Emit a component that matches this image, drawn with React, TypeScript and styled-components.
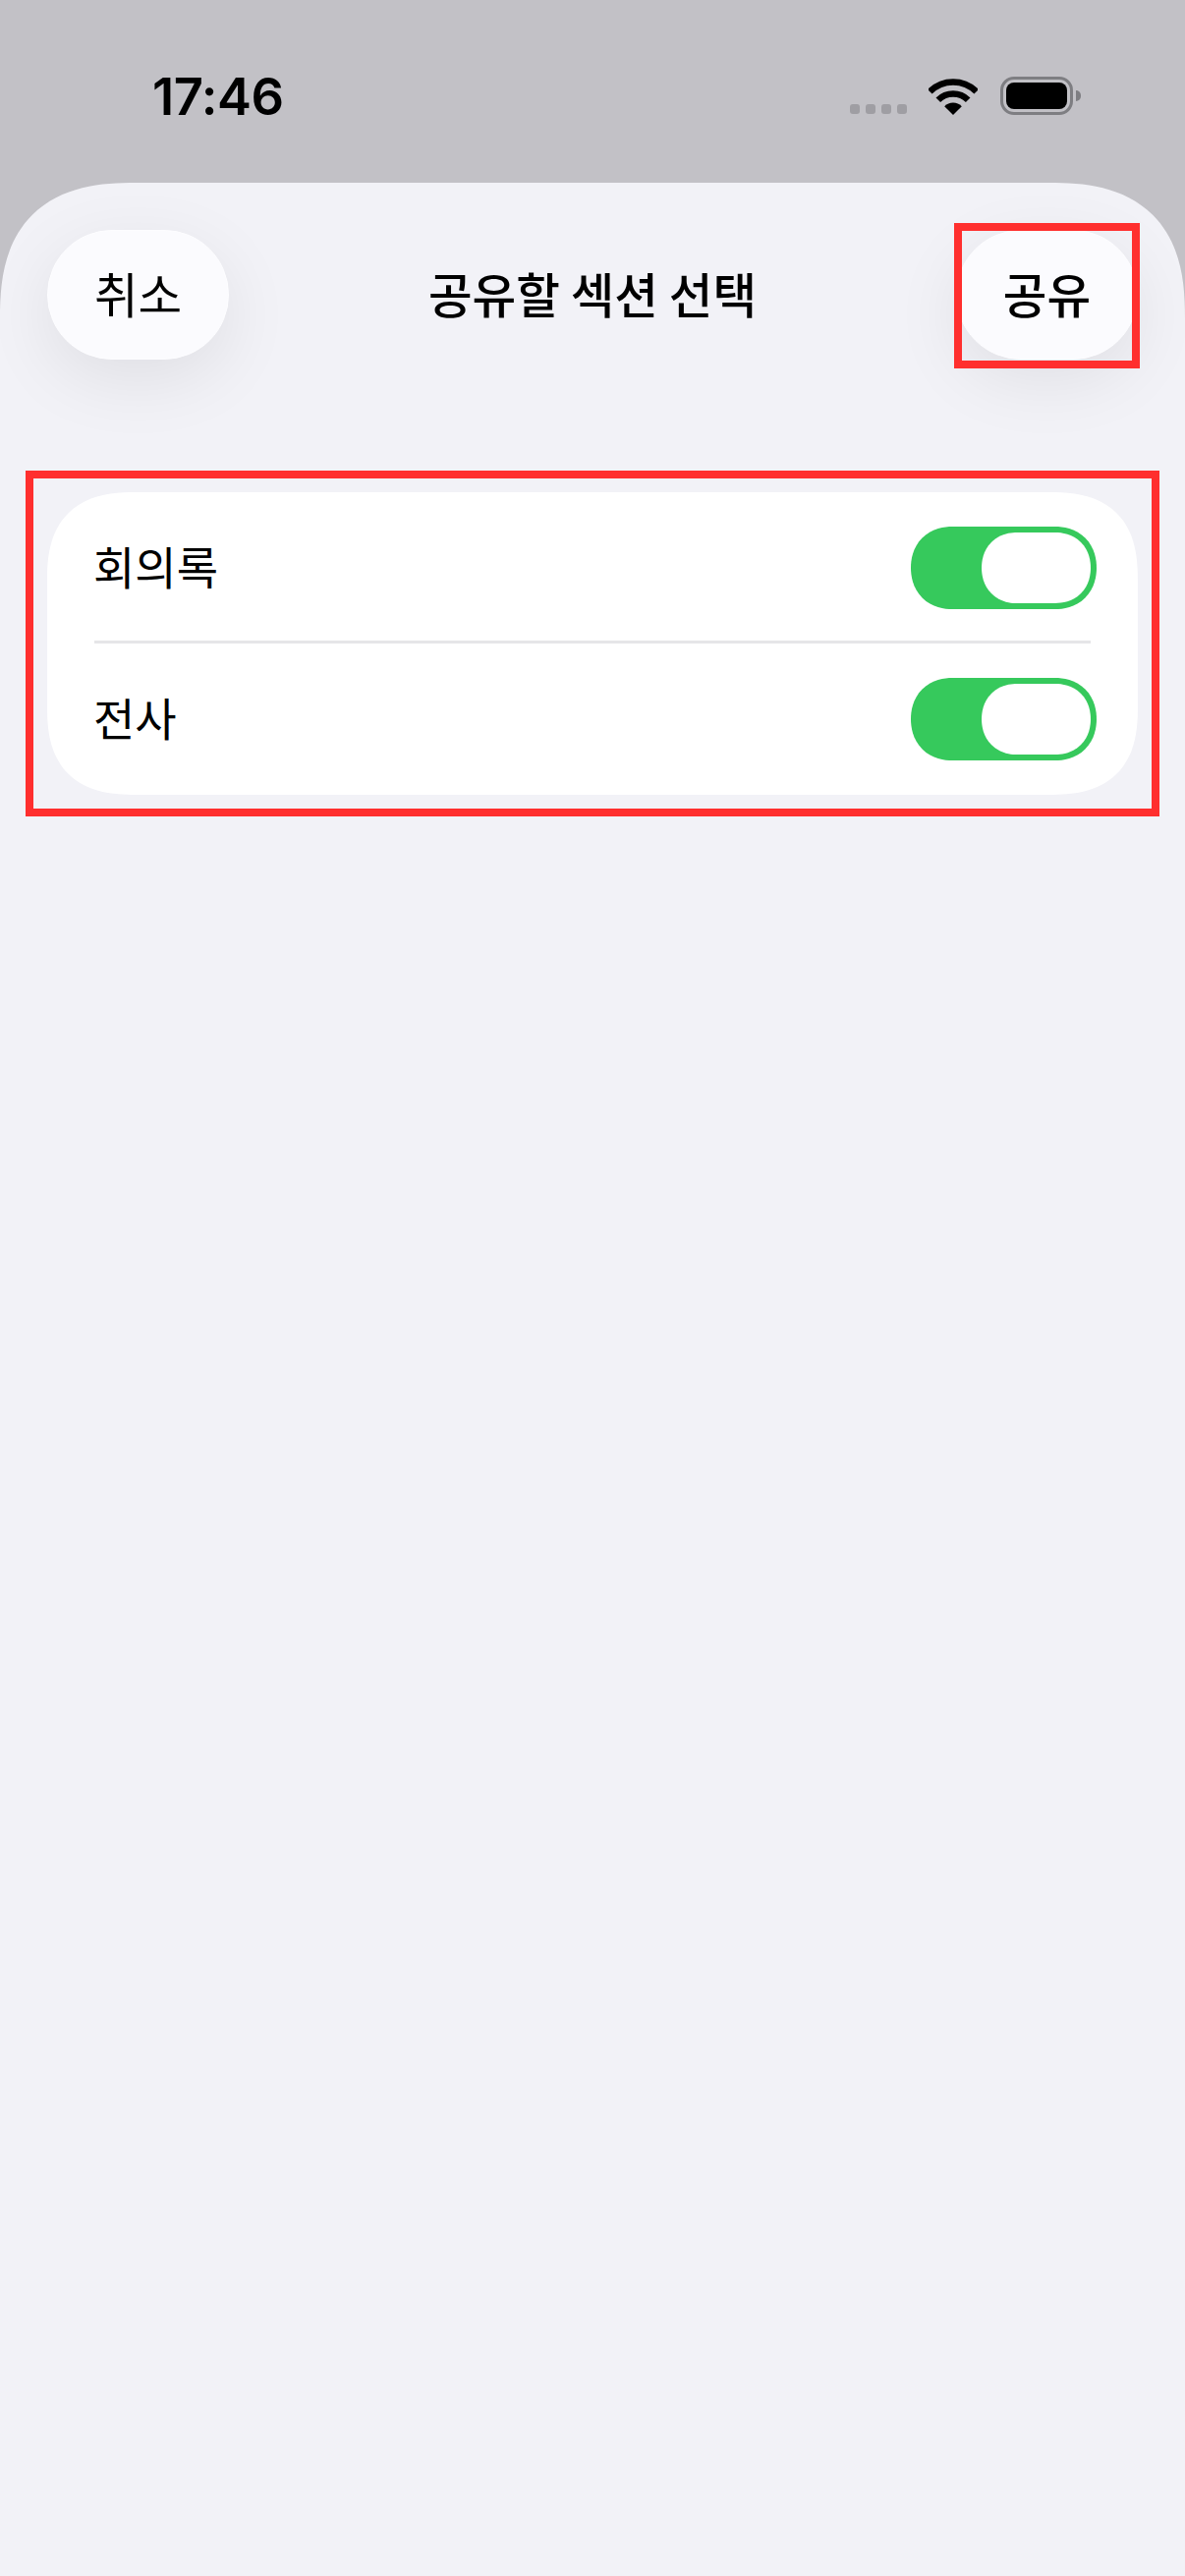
import React from 'react';
import styled, { createGlobalStyle } from 'styled-components';

const GlobalStyle = createGlobalStyle`
  html, body {
    margin: 0;
    padding: 0;
    background: #c2c1c6;
  }
  #root {
    width: 1206px;
    min-height: 2622px;
  }
`;

const Page = styled.div`
  display: flex;
  flex-direction: column;
  width: 1206px;
  height: 2622px;
  overflow: hidden;
  background: #c2c1c6;
  font-family: 'Noto Sans CJK KR', 'Noto Sans', sans-serif;
  color: #000;
`;

const StatusBar = styled.div`
  display: flex;
  justify-content: space-between;
  align-items: flex-start;
  flex: 0 0 186px;
  box-sizing: border-box;
  padding: 78px 106px 0 155px;
`;

const Time = styled.div`
  font-family: Inter, 'Liberation Sans', sans-serif;
  font-size: 52.5px;
  font-weight: 600;
  line-height: 40px;
  letter-spacing: -0.5px;
`;

const StatusIcons = styled.div`
  display: flex;
  align-items: flex-end;
  height: 39px;
`;

const SignalDots = styled.div`
  display: flex;
  gap: 6px;
  margin: 0 22px 1px 0;
`;

const SignalDot = styled.span`
  width: 10px;
  height: 10px;
  border-radius: 3px;
  background: #9f9ea3;
`;

const Battery = styled.div`
  display: flex;
  align-items: center;
  margin-left: 23px;
`;

const BatteryBody = styled.div`
  box-sizing: border-box;
  width: 74px;
  height: 39px;
  padding: 3px;
  border: 3px solid #7e7e82;
  border-radius: 14px;
`;

const BatteryFill = styled.div`
  height: 100%;
  border-radius: 8px;
  background: #000;
`;

const BatteryCap = styled.div`
  width: 5px;
  height: 11px;
  margin-left: 3px;
  border-radius: 0 6px 6px 0;
  background: #7e7e82;
`;

const Sheet = styled.div`
  flex: 1;
  overflow: hidden;
  padding: 48px 48px 0;
  background: #f2f2f7;
  border-radius: 138px 138px 0 0;
  corner-shape: superellipse(1.35);
`;

const Header = styled.header`
  display: flex;
  justify-content: space-between;
  align-items: center;
`;

const PillWrap = styled.div<{ $marked?: boolean }>`
  position: relative;

  ${({ $marked }) =>
    $marked &&
    `&::after {
      content: '';
      position: absolute;
      inset: -7px -2px -9px -2px;
      border: 8px solid #ff2f2e;
    }`}
`;

const PillButton = styled.button<{ $strong?: boolean }>`
  display: block;
  width: 185px;
  height: 132px;
  padding: 0 0 4px;
  border: 1px solid #fdfdff;
  border-radius: 66px;
  background: #fbfbfe;
  box-shadow: 0 20px 70px rgba(0, 0, 0, 0.08);
  color: #000;
  font-family: inherit;
  font-size: 48.5px;
  font-weight: ${({ $strong }) => ($strong ? 500 : 400)};
  letter-spacing: 0;
`;

const Title = styled.h1`
  margin: 0 0 4px;
  font-size: 48.5px;
  font-weight: 500;
  line-height: 60px;
  letter-spacing: 0;
`;

const Card = styled.section`
  position: relative;
  margin-top: 135px;
  height: 308px;
  box-sizing: border-box;
  padding-top: 3px;
  background: #fff;
  border-radius: 90px;
  corner-shape: superellipse(1.35);

  &::after {
    content: '';
    position: absolute;
    inset: -22px;
    border: 8px solid #ff2f2e;
    pointer-events: none;
  }
`;

const Row = styled.div<{ $height: number }>`
  display: flex;
  justify-content: space-between;
  align-items: center;
  box-sizing: border-box;
  height: ${({ $height }) => $height}px;
  padding: 0 42px 0 47px;
`;

const RowLabel = styled.span`
  padding-bottom: 6px;
  font-size: 46px;
  font-weight: 400;
`;

const Divider = styled.div`
  height: 3px;
  margin: 0 48px 0 48px;
  background: #e6e6e8;
`;

const Toggle = styled.div`
  display: flex;
  justify-content: flex-end;
  box-sizing: border-box;
  width: 189px;
  height: 84px;
  padding: 6px;
  border-radius: 42px;
  corner-shape: superellipse(1.1);
  background: #36c95c;
`;

const ToggleKnob = styled.div`
  width: 111px;
  height: 72px;
  border-radius: 36px;
  corner-shape: superellipse(1.1);
  background: #fff;
`;

const WifiIcon = () => (
  <svg width="50" height="37" viewBox="0 0 50 37" fill="none">
    <path d="M1.3 13.3A33.5 33.5 0 0 1 48.7 13.3" stroke="#000" strokeWidth="6.5" />
    <path d="M9.8 21.8A21.5 21.5 0 0 1 40.2 21.8" stroke="#000" strokeWidth="6.5" />
    <path d="M25 37L16.2 28.2A12.5 12.5 0 0 1 33.8 28.2Z" fill="#000" />
  </svg>
);

const App: React.FC = () => {
  return (
    <Page>
      <GlobalStyle />
      <StatusBar>
        <Time>17:46</Time>
        <StatusIcons>
          <SignalDots>
            <SignalDot />
            <SignalDot />
            <SignalDot />
            <SignalDot />
          </SignalDots>
          <WifiIcon />
          <Battery>
            <BatteryBody>
              <BatteryFill />
            </BatteryBody>
            <BatteryCap />
          </Battery>
        </StatusIcons>
      </StatusBar>
      <Sheet>
        <Header>
          <PillWrap>
            <PillButton>취소</PillButton>
          </PillWrap>
          <Title>공유할 섹션 선택</Title>
          <PillWrap $marked>
            <PillButton $strong>공유</PillButton>
          </PillWrap>
        </Header>
        <Card>
          <Row $height={148}>
            <RowLabel>회의록</RowLabel>
            <Toggle>
              <ToggleKnob />
            </Toggle>
          </Row>
          <Divider />
          <Row $height={154}>
            <RowLabel>전사</RowLabel>
            <Toggle>
              <ToggleKnob />
            </Toggle>
          </Row>
        </Card>
      </Sheet>
    </Page>
  );
};

export default App;
